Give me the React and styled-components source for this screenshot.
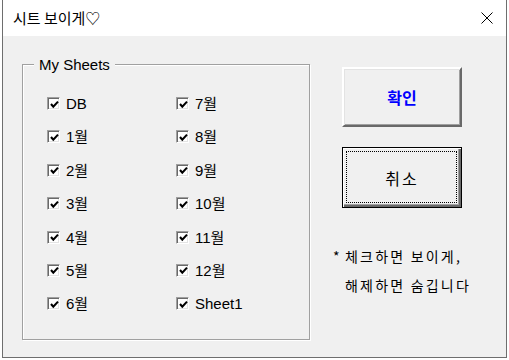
import React from 'react';
import styled, { createGlobalStyle } from 'styled-components';

const Global = createGlobalStyle`
  html, body { margin: 0; padding: 0; background: #fff; }
  body { font-family: "Liberation Sans", "Noto Sans CJK KR", sans-serif; }
  * { box-sizing: border-box; }
`;

const Page = styled.div`
  width: 509px;
  height: 360px;
  overflow: hidden;
  padding-left: 2px;
  background: #fff;
`;

const Window = styled.div`
  width: 505px;
  height: 358px;
  border: 1px solid #6e6e6e;
  border-top: none;
  display: flex;
  flex-direction: column;
  background: #f0f0f0;
`;

const TitleBar = styled.div`
  height: 36px;
  flex: none;
  background: #fff;
  display: flex;
  align-items: center;
  justify-content: space-between;
  padding: 0 13px 0 10px;
`;

const Title = styled.span`
  font-family: "Noto Sans CJK KR", sans-serif;
  font-size: 15px;
  color: #000;
  line-height: 20px;
`;

const CloseIcon = styled.svg`
  width: 12px;
  height: 12px;
  display: block;
`;

const Body = styled.div`
  flex: 1;
  display: flex;
  padding: 28px 0 0 19px;
`;

const Group = styled.div`
  position: relative;
  width: 288px;
  height: 276px;
  border: 1px solid #a0a0a0;
  box-shadow: inset 1px 1px 0 #fff, 1px 1px 0 #fff;
  padding: 31px 0 0 24px;
`;

const Legend = styled.span`
  position: absolute;
  top: -9px;
  left: 11px;
  padding: 0 5px;
  background: #f0f0f0;
  font-size: 15px;
  line-height: 17px;
  color: #000;
`;

const Grid = styled.div`
  display: grid;
  grid-template-columns: 129px 1fr;
  grid-template-rows: repeat(7, 33.4px);
  grid-auto-flow: column;
  align-items: start;
`;

const Item = styled.label`
  display: flex;
  align-items: center;
  height: 15px;
  gap: 6px;
  font-size: 15px;
  line-height: 15px;
  color: #000;
  font-family: "Liberation Sans", "Noto Sans CJK KR", sans-serif;
`;

const Box = styled.span`
  width: 13px;
  height: 13px;
  flex: none;
  background: #fff;
  border: 1px solid;
  border-color: #a0a0a0 #fff #fff #a0a0a0;
  box-shadow: inset 1px 1px 0 #696969, inset -1px -1px 0 #e3e3e3;
  display: flex;
  align-items: center;
  justify-content: center;
  padding-left: 1px;
  padding-top: 1px;
`;

const Side = styled.div`
  margin-left: 23px;
  display: flex;
  flex-direction: column;
`;

const Button = styled.div`
  position: relative;
  margin-left: 9px;
  width: 120px;
  height: ${p => (p.$default ? 61 : 60)}px;
  margin-top: ${p => p.$top}px;
  background: #f0f0f0;
  display: flex;
  align-items: center;
  justify-content: center;
  font-family: "Noto Sans CJK KR", sans-serif;
  font-size: 16px;
  letter-spacing: ${p => (p.$primary ? 0 : 2)}px;
  font-weight: ${p => (p.$primary ? 700 : 400)};
  color: ${p => (p.$primary ? '#0000ff' : '#000')};
  border: ${p => (p.$default ? '1px solid #000' : '2px solid')};
  border-color: ${p => (p.$default ? '#000' : '#fff #696969 #696969 #fff')};
  box-shadow: ${p =>
    p.$default
      ? 'inset 1px 1px 0 #fff, inset -2px -2px 0 #696969, inset -3px -3px 0 #a0a0a0'
      : 'inset 1px 1px 0 #e3e3e3, inset -1px -1px 0 #a0a0a0'};
  ${p =>
    p.$default &&
    `&::after {
      content: '';
      position: absolute;
      inset: 3px 4px 4px 3px;
      border: 1px dotted #000;
    }`}
`;

const Note = styled.div`
  margin-top: 34px;
  font-family: "Noto Sans CJK KR", sans-serif;
  font-size: 14px;
  letter-spacing: 2.2px;
  line-height: 29px;
  color: #000;
  white-space: nowrap;
`;

const Star = styled.span`
  display: inline-block;
  width: 12px;
  letter-spacing: 0;
`;

const NoteLine = styled.div`
  padding-left: ${p => (p.$indent ? 12 : 0)}px;
`;

const Check = () => (
  <svg width="9" height="9" viewBox="0 0 9 9">
    <polyline points="1,4 3.3,6.6 8,1.6" fill="none" stroke="#000" strokeWidth="2.1" />
  </svg>
);

const sheets = ['DB', '1월', '2월', '3월', '4월', '5월', '6월', '7월', '8월', '9월', '10월', '11월', '12월', 'Sheet1'];

export default function App() {
  return (
    <Page>
      <Global />
      <Window>
        <TitleBar>
          <Title>시트 보이게♡</Title>
          <CloseIcon viewBox="0 0 12 12">
            <line x1="0.5" y1="0.5" x2="11.5" y2="11.5" stroke="#000" strokeWidth="1" />
            <line x1="11.5" y1="0.5" x2="0.5" y2="11.5" stroke="#000" strokeWidth="1" />
          </CloseIcon>
        </TitleBar>
        <Body>
          <Group>
            <Legend>My Sheets</Legend>
            <Grid>
              {sheets.map(s => (
                <Item key={s}>
                  <Box>
                    <Check />
                  </Box>
                  {s}
                </Item>
              ))}
            </Grid>
          </Group>
          <Side>
            <Button $primary $top={3}>확인</Button>
            <Button $default $top={20}>취소</Button>
            <Note>
              <NoteLine><Star>*</Star>체크하면 보이게,</NoteLine>
              <NoteLine $indent>해제하면 숨깁니다</NoteLine>
            </Note>
          </Side>
        </Body>
      </Window>
    </Page>
  );
}
